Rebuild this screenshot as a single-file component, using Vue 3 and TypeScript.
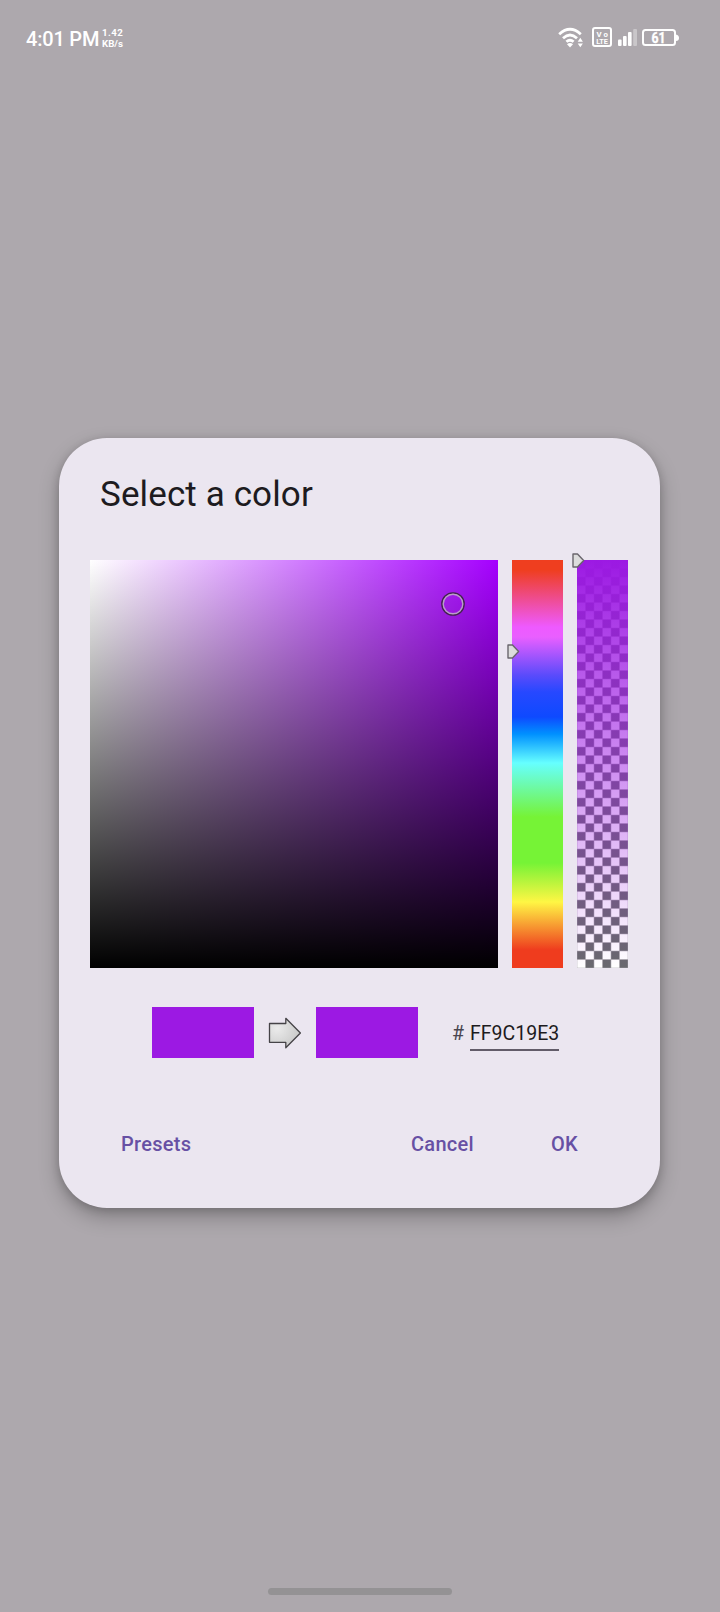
<script setup lang="ts">
import { computed, ref } from 'vue'

const alpha = ref('FF')
const color = ref('9C19E3')
const hex = computed(() => alpha.value + color.value)
const swatch = computed(() => ({ background: '#' + color.value }))
</script>

<template>
  <main class="screen">
    <header class="status">
      <span class="time">4:01 PM</span>
      <span class="speed"><span class="rate">1.42</span><span>KB/s</span></span>
      <svg class="signals" width="124" height="24" viewBox="0 0 124 24">
        <g fill="none" stroke="#fff" stroke-width="2.8">
          <path d="M1.2 8.2Q12 -1.6 22.8 8.2" />
          <path d="M5 12.2Q12 5.8 19 12.2" />
          <path d="M8.4 15.8Q12 12.6 15.6 15.8" />
        </g>
        <path d="M9 18.2Q12 15.8 15 18.2L12 21.6Z" fill="#fff" />
        <path d="M19.7 15.8 22.3 11.8 24.9 15.8ZM19.7 17.4H24.9L22.3 21.2Z" fill="#fff" />
        <rect x="35" y="2" width="18" height="18" rx="2" fill="none" stroke="#fff" stroke-width="2" />
        <text x="38.4" y="10.6" class="tiny" textLength="11.4">Vo</text>
        <text x="38.2" y="18" class="tiny" textLength="11.8" lengthAdjust="spacingAndGlyphs">LTE</text>
        <g fill="#fff">
          <rect x="60" y="13.5" width="3.6" height="6.5" rx="1" />
          <rect x="65" y="10" width="3.6" height="10" rx="1" />
          <rect x="70" y="6" width="3.6" height="14" rx="1" />
          <rect x="75.2" y="3" width="3.8" height="17" rx="1" opacity=".35" />
          <path d="M118 8.5q3 .5 3 3.5t-3 3z" />
        </g>
        <rect x="85" y="4" width="32" height="15" rx="2.5" fill="none" stroke="#fff" stroke-width="2" />
        <text x="93.4" y="16.6" class="percent" textLength="14" lengthAdjust="spacingAndGlyphs">61</text>
      </svg>
    </header>

    <section class="dialog">
      <h1>Select a color</h1>
      <div class="pickers">
        <div class="field">
          <svg class="ring" width="24" height="24" viewBox="0 0 24 24" fill="none">
            <circle cx="12" cy="12" r="11" stroke="#43244f" stroke-width="1.7" />
            <circle cx="12" cy="12" r="9.8" stroke="#bb9cca" stroke-width="1.4" />
          </svg>
        </div>
        <div class="bar hue">
          <svg class="thumb" width="13" height="15" viewBox="0 0 13 15">
            <path d="M1 1H5.5L11.6 7.5 5.5 14H1Z" fill="#dcdcdc" stroke="#69656c" stroke-width="1.4" stroke-linejoin="round" />
          </svg>
        </div>
        <div class="bar">
          <svg class="checks" width="51" height="408">
            <defs>
              <pattern id="checker" width="17" height="17" patternUnits="userSpaceOnUse">
                <rect width="17" height="17" fill="#fff" />
                <path d="M0 0H8.5V8.5H17V17H8.5V8.5H0Z" fill="#69696e" />
                <path d="M0 0H17M0 8.5H17M0 17H17M0 0V17M8.5 0V17M17 0V17" stroke="#aaa8ad" stroke-opacity=".55" stroke-width="1" />
              </pattern>
              <linearGradient id="fade" x1="0" y1="0" x2="0" y2="1">
                <stop offset="0" stop-color="#9c19e3" />
                <stop offset="1" stop-color="#9c19e3" stop-opacity="0" />
              </linearGradient>
            </defs>
            <rect width="51" height="408" fill="url(#checker)" />
            <rect width="51" height="408" fill="url(#fade)" />
          </svg>
          <svg class="thumb top" width="13" height="15" viewBox="0 0 13 15">
            <path d="M1 1H5.5L11.6 7.5 5.5 14H1Z" fill="#dcdcdc" stroke="#69656c" stroke-width="1.4" stroke-linejoin="round" />
          </svg>
        </div>
      </div>

      <div class="result">
        <div class="swatch" :style="swatch"></div>
        <svg class="arrow" width="34" height="32" viewBox="0 0 34 32">
          <defs>
            <radialGradient id="metal" cx=".25" cy=".35" r=".7">
              <stop offset="0" stop-color="#ebebeb" />
              <stop offset="1" stop-color="#cbcbcb" />
            </radialGradient>
          </defs>
          <path d="M1.5 6.5H17.8V1.3L32.4 16 17.8 30.7V25.3H1.5Z" fill="url(#metal)" stroke="#454347" stroke-width="1.3" stroke-linejoin="round" />
        </svg>
        <div class="swatch" :style="swatch"></div>
        <span class="hash">#</span>
        <span class="hex">{{ hex }}</span>
      </div>

      <footer class="actions">
        <button class="presets">Presets</button>
        <button class="cancel">Cancel</button>
        <button class="ok">OK</button>
      </footer>
    </section>

    <div class="home"></div>
  </main>
</template>

<style>
body {
  background: #ada8ad;
}
</style>

<style scoped>
.screen {
  box-sizing: border-box;
  width: 720px;
  height: 1612px;
  display: flex;
  flex-direction: column;
  background: #ada8ad;
  font-family: Roboto, "Liberation Sans", sans-serif;
  overflow: hidden;
}
.status {
  box-sizing: border-box;
  width: 100%;
  height: 438px;
  padding: 26px 38px 0 26px;
  display: flex;
  align-items: flex-start;
  color: #fff;
}
.time {
  font-size: 20px;
  line-height: 26px;
  font-weight: 500;
  letter-spacing: -0.2px;
  width: 75px;
  white-space: nowrap;
}
.speed {
  display: flex;
  flex-direction: column;
  font-size: 9.7px;
  line-height: 11px;
  font-weight: 700;
  margin-top: 1px;
  margin-left: 1px;
}
.rate {
  letter-spacing: 0.4px;
}
.signals {
  margin-left: auto;
}
.tiny {
  font-size: 7.8px;
  font-weight: 700;
  fill: #fff;
}
.percent {
  font-size: 14px;
  font-weight: 700;
  fill: #fff;
  stroke: #fff;
  stroke-width: 0.4px;
}
.dialog {
  width: 601px;
  height: 770px;
  margin-left: 59px;
  flex: none;
  border-radius: 48px;
  background: #ebe6f0;
  box-shadow: 0 9px 20px rgba(0, 0, 0, 0.25), 0 2px 9px rgba(0, 0, 0, 0.16);
}
h1 {
  margin: 0;
  padding: 36px 0 0 41px;
  height: 86px;
  font-size: 35px;
  line-height: 42px;
  font-weight: 400;
  letter-spacing: 0.12px;
  color: #1d1b20;
}
.pickers {
  display: flex;
  gap: 14px;
  padding-left: 31px;
}
.field {
  position: relative;
  width: 408px;
  height: 408px;
  background: linear-gradient(to top, #000, transparent), linear-gradient(to right, #fff, #a500ff);
}
.ring {
  position: absolute;
  left: 351px;
  top: 32px;
}
.bar {
  position: relative;
  width: 51px;
  height: 408px;
}
.hue {
  background: linear-gradient(
    #ef3e1f 0,
    #ef3e1f 10px,
    #ee5aff 67px,
    #e95fff 77px,
    #5b4bfb 115px,
    #2748ff 132px,
    #0e4aff 157px,
    #0090ff 174px,
    #66ffff 203px,
    #76f336 257px,
    #76f336 303px,
    #fff644 342px,
    #ef3c1e 390px,
    #ef3c1e 408px
  );
}
.checks {
  display: block;
}
.thumb {
  position: absolute;
  left: -5px;
  top: 84px;
}
.thumb.top {
  top: -7px;
}
.result {
  display: flex;
  align-items: center;
  height: 51px;
  padding: 39px 0 0 90px;
  margin-left: 3px;
}
.swatch {
  width: 102px;
  height: 51px;
}
.arrow {
  margin: 0 14px;
}
.hash {
  margin-left: 34px;
  margin-top: 2px;
  width: 18px;
  font-size: 19.5px;
  color: #49454f;
}
.hex {
  box-sizing: border-box;
  width: 89px;
  height: 37px;
  padding-top: 7px;
  border-bottom: 2px solid #625c69;
  font-size: 19.5px;
  line-height: 25px;
  color: #1d1b20;
}
.actions {
  display: flex;
  padding-top: 64px;
}
button {
  border: 0;
  padding: 0;
  background: none;
  font: 500 20px/44px Roboto, "Liberation Sans", sans-serif;
  letter-spacing: 0.3px;
  color: #6750a4;
  text-align: left;
}
.presets {
  margin-left: 62px;
  width: 290px;
}
.cancel {
  width: 140px;
}
.home {
  align-self: center;
  width: 184px;
  height: 7px;
  margin-top: 380px;
  border-radius: 4px;
  background: #949294;
}
</style>
